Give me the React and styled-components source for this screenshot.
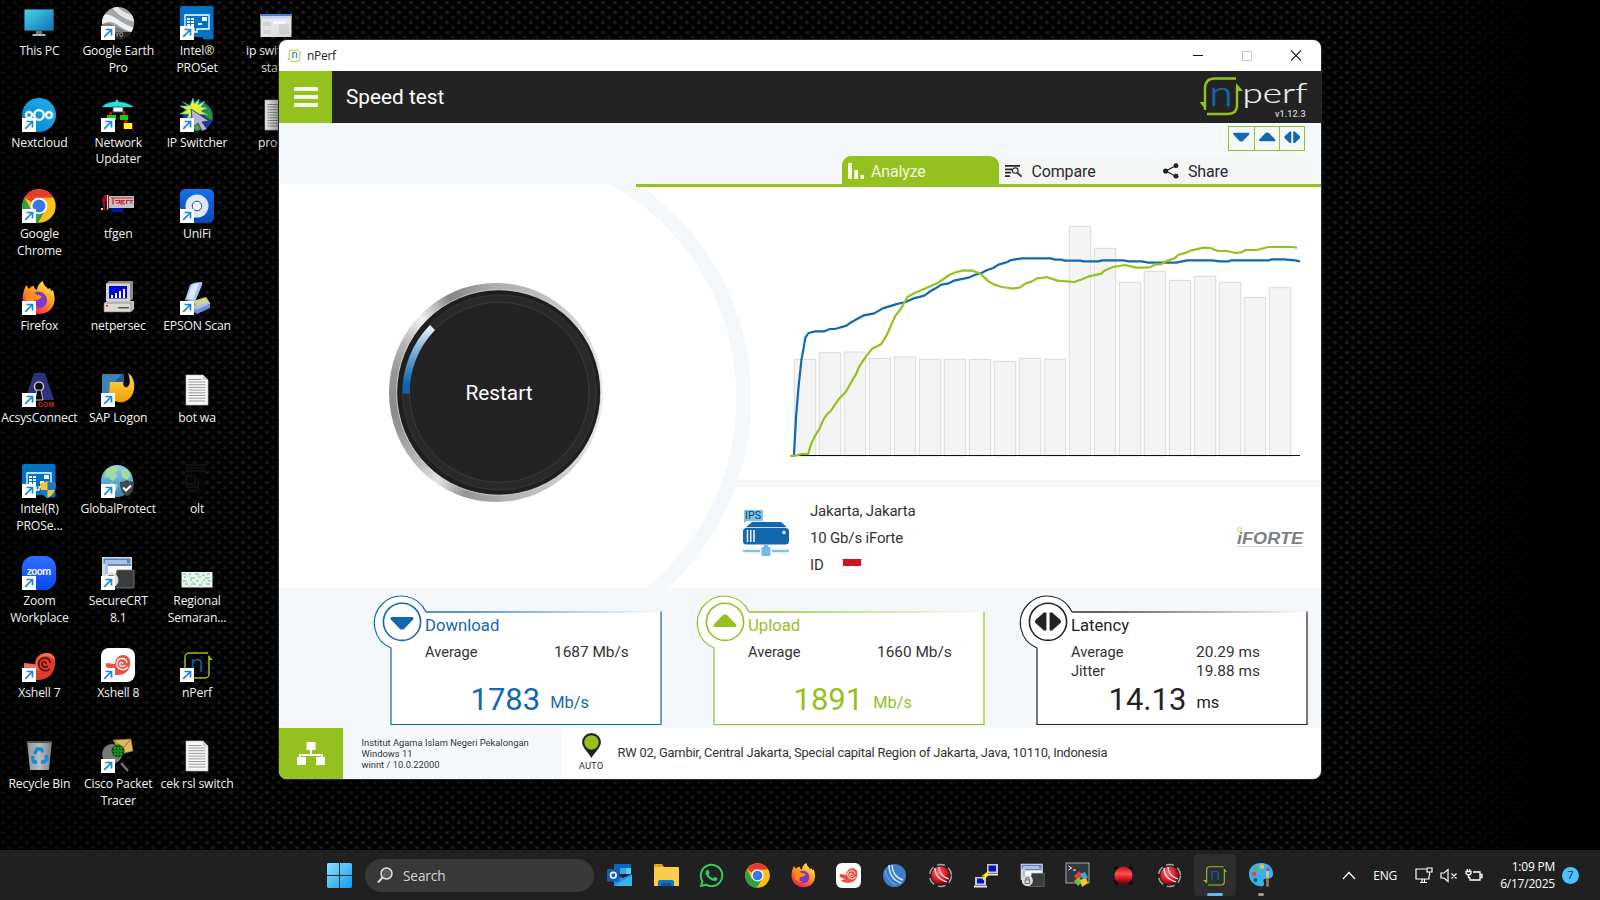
import React from "react";
import styled, { createGlobalStyle, css } from "styled-components";
import { FaWhatsapp } from "react-icons/fa";

const GREEN = "#95c11f";
const BLUE = "#1268b0";
const DARK = "#232323";
const PALE = "#f4f8fb";
const roboto = `Roboto, "Liberation Sans", sans-serif`;
const system = `"Open Sans", "Noto Sans", sans-serif`;

const GlobalStyle = createGlobalStyle`
  * { box-sizing: border-box; }
  body { margin: 0; background: #000; overflow: hidden; }
  svg { display: block; overflow: visible; }
`;

/* ---------- desktop ---------- */

const Desktop = styled.main`
  position: relative;
  width: 1600px;
  height: 900px;
  display: flex;
  flex-direction: column;
  justify-content: space-between;
  overflow: hidden;
  background-color: #020202;
  background-image:
    linear-gradient(90deg, rgba(0, 0, 0, 0.6) 0, rgba(0, 0, 0, 0) 18%, rgba(0, 0, 0, 0) 84%, rgba(0, 0, 0, 0.9) 96%),
    radial-gradient(ellipse 2.8px 2.2px at 3px 2.5px, #242424 0, #181818 60%, transparent 100%),
    radial-gradient(ellipse 2.8px 2.2px at 3px 2.5px, #1f1f1f 0, #151515 60%, transparent 100%);
  background-size: 100% 100%, 12px 10px, 12px 10px;
  background-position: 0 0, 0 0, 6px 5px;
`;

const Shortcuts = styled.div`
  display: grid;
  grid-auto-flow: column;
  grid-template-rows: repeat(9, 91.67px);
  grid-auto-columns: 78.8px;
`;

const Shortcut = styled.div`
  display: flex;
  flex-direction: column;
  align-items: center;
  padding-top: 6px;
`;

const IconBox = styled.div`
  position: relative;
  width: 34px;
  height: 34px;
`;

const ArrowBadge = styled.svg`
  position: absolute;
  left: 0;
  bottom: 0;
`;

const Label = styled.span`
  width: 83px;
  margin-top: 3px;
  text-align: center;
  white-space: pre-line;
  font: 12.2px/16.67px ${system};
  letter-spacing: -0.17px;
  color: #f2f2f2;
  text-shadow: 0 1px 2px #000;
`;

/* ---------- icon drawings ---------- */

const Svg = ({ size = 34, box = 34, children }) => (
  <svg width={size} height={size} viewBox={`0 0 ${box} ${box}`}>{children}</svg>
);

const ThisPc = () => (
  <Svg>
    <defs><linearGradient id="pc" x1="0" y1="0" x2="1" y2="1"><stop stopColor="#45d5e4" /><stop offset="1" stopColor="#1271b8" /></linearGradient></defs>
    <path d="M14 24h6v4h-6z" fill="#6c7880" /><path d="M10.500 28h13v2h-13z" fill="#a9b3b9" />
    <rect x="2" y="3" width="30" height="22" rx="1" fill="#17547c" /><rect x="2.800" y="3.800" width="28.400" height="20.400" fill="url(#pc)" />
  </Svg>
);
const Earth = () => (
  <Svg>
    <defs><clipPath id="ea"><circle cx="17" cy="17" r="16" /></clipPath></defs>
    <g clipPath="url(#ea)">
      <rect width="34" height="34" fill="#a4a6a9" />
      <path d="M0 11C9 3 16 17 34 22v5C18 24 13 10 0 19z" fill="#eef0f1" /><path d="M10 0c6 9 14 13 26 17V9C26 9 20 5 16 0z" fill="#e3e5e6" />
      <path d="M0 19c12-6 18 7 34 8v3H0z" fill="#7b7e82" /><path d="M0 26h34v9H0z" fill="#222" />
    </g>
    <text x="14" y="31" fontSize="6.500" fontFamily="Roboto" fontWeight="700" fill="#999">YO</text>
  </Svg>
);
const Intel = ({ shield }) => (
  <Svg>
    <path d="M2 0h30a1.500 1.500 0 0 1 1.500 1.500V32a1.500 1.500 0 0 1-1.500 1.500H24L22 31H0V2a2 2 0 0 1 2-2z" fill="#0071c5" />
    <path d="M5 9h24v14H17v3h-3v-3H5z" fill="none" stroke="#fff" strokeWidth="1.300" />
    <path d="M7 12h3v2H7zm4 0h3v2h-3zm-4 3h3v2H7zm4 0h3v2h-3zm-4 3h3v2H7zm4 0h3v2h-3zM22 11h5v4h-5zM18 17h4v2h-4z" fill="#fff" />
    {shield && <g><path d="M18 19c4 0 5-1 7.500-2 2.500 1 4 2 8 2 0 8-2 12-8 15-5-3-7.500-7-7.500-15z" fill="#f7ca33" /><path d="M25.500 17c2.500 1 4 2 8 2 0 3 0 5-.7 7h-7.300zM18.500 26h7v8c-4-2-6-4-7-8z" fill="#2175c9" /></g>}
  </Svg>
);
const Nextcloud = () => (
  <Svg>
    <defs><linearGradient id="nc" x1="0" y1="1" x2="1" y2="0"><stop stopColor="#0082c9" /><stop offset="1" stopColor="#26b0f4" /></linearGradient></defs>
    <circle cx="17" cy="17" r="17" fill="url(#nc)" />
    <g fill="none" stroke="#fff" strokeWidth="2.300"><circle cx="17" cy="17" r="4.800" /><circle cx="7" cy="17" r="3" /><circle cx="27" cy="17" r="3" /></g>
  </Svg>
);
const Updater = () => (
  <Svg>
    <path d="M1 9c3-4 9-5 13-5l2-3 2 3c5 0 11 2 15 5z" fill="#19e5e8" />
    <path d="M10 14l-1 4M23 13v5M24 19l2 12" stroke="#e00" strokeWidth="2.500" /><path d="M12 9h10v5H12z" fill="#fff" stroke="#555" />
    <path d="M6 17h9v5H6zM19 17h8v5h-8z" fill="#00d800" /><path d="M23 25h8v6h-8z" fill="#ff0" /><path d="M22 25h1v6h-1zM31 25h1v8h-1z" fill="#d00" />
  </Svg>
);
const IpSwitcher = () => (
  <Svg>
    <circle cx="18" cy="18" r="15" fill="#133d9c" /><path d="M22 5c9 3 12 10 10 18l-7-5z" fill="#2f8c32" /><path d="M8 23l10-5 6 12-8 3z" fill="#3ea63c" />
    <path d="M13 0l1.500 6L19 1l-1 6 7-4-4 6 6 1-6 3 7 4-8-1 1 7-5-5-3 8-1-8-6 5 3-7-9 0 7-4-7-4 8 0L3 4l7 4z" fill="#dcf53a" stroke="#36c9b1" strokeWidth=".7" />
    <path d="M11 11l18 12-7 1 5 7-5 2-4-8-5 4z" fill="#bbb1d8" stroke="#3a3456" strokeWidth=".9" />
  </Svg>
);
const Chrome = ({ size = 34 }) => (
  <Svg size={size}>
    <circle cx="17" cy="17" r="16.700" fill="#fbc116" />
    <path d="M2.500 8.600A16.700 16.700 0 0 1 31.500 8.600L17 8.800z" fill="#e33b2e" /><path d="M17 8.800L31.500 8.600H17A9 9 0 0 0 9.500 13L2.500 8.600z" fill="#e33b2e" />
    <path d="M2.500 8.600A16.700 16.700 0 0 0 16 33.700l7.500-12.400L9.200 21z" fill="#2d9f47" />
    <circle cx="17" cy="17" r="8.300" fill="#fff" /><circle cx="17" cy="17" r="6.500" fill="#3677e8" />
  </Svg>
);
const Tfgen = () => (
  <Svg>
    <path d="M9 19h14l-2 4H11z" fill="#0714a8" /><path d="M1 11l2-5h5v15H3z" fill="#a00f16" /><path d="M4 12h3v8H4z" fill="#07107c" /><path d="M8 7h25v12H8z" fill="#bfc3c8" /><path d="M6 6h1v14H6zM0 19h2v2H0z" fill="#f7ec79" />
    <path d="M10 9h22M12 9.500v6M14 11.500h4.500v2.500H15M24 11.500h-4v3.500h4M20 13.200h3M29 11.500h-3.500v3.500M32 11.500h-2v3" stroke="#d51d26" fill="none" strokeWidth="1.200" />
  </Svg>
);
const Unifi = () => (
  <Svg>
    <defs><linearGradient id="uf" x1="0" y1="0" x2="0" y2="1"><stop stopColor="#1670e8" /><stop offset="1" stopColor="#0749b5" /></linearGradient></defs>
    <rect width="34" height="34" rx="5" fill="url(#uf)" /><circle cx="17" cy="17" r="11.500" fill="#dfe7f3" /><circle cx="17" cy="17" r="4.800" fill="#f7f9fb" stroke="#1d519b" strokeWidth="1" />
  </Svg>
);
const Firefox = ({ size = 34 }) => (
  <Svg size={size}>
    <defs><linearGradient id="ff" x1=".8" y1="0" x2=".2" y2="1"><stop stopColor="#fff14a" /><stop offset=".45" stopColor="#ff9a1f" /><stop offset=".8" stopColor="#ff3d47" /><stop offset="1" stopColor="#e31587" /></linearGradient></defs>
    <path d="M2 9l2-5 3 4c1-2 3-3 5-3 0 2 1 3 3 4 0-3 2-7 6-9 0 4 3 5 5 8l2-1 1 3 2-1c3 9 2 16-4 21-6 4-15 4-21-1C0 24 0 16 2 9z" fill="url(#ff)" />
    <path d="M11 12c6-4 14 0 14 7 0 6-5 9-10 8-5-1-7-6-4-9 3 2 6 1 8-1-2-2-5-3-8-5z" fill="#7a39c8" /><path d="M4 13c3-3 8-3 11 1 2 0 4 0 5 2-2 2-6 1-8 4s1 5 4 5c-6 3-13-3-12-12z" fill="#ff8b1a" />
  </Svg>
);
const Netpersec = () => (
  <Svg>
    <path d="M5 3l3-3h24v18l-3 2z" fill="#8d8d86" /><path d="M5 2.500h24V20H5z" fill="#d5d3cc" /><path d="M8 5h18v12.500H8z" fill="#0006d8" />
    <path d="M10 14h2v3h-2zm4-2h2v5h-2zm4-2h2v7h-2zm4-2h2v9h-2z" fill="#fff" /><path d="M3 22l3-2h27v8l-3 3H3z" fill="#c7c5bd" /><path d="M3 22h27v9H3z" fill="#d9d8d2" stroke="#777" strokeWidth=".6" /><path d="M17 26h11v1.500H17z" fill="#555" /><path d="M5 24h2v1.500H5z" fill="#c22" />
  </Svg>
);
const Epson = () => (
  <Svg>
    <path d="M10 4c2-2 8-3 11-3 1.500 0 1.500 1 1 3l-7 17-10-2z" fill="#a9c3ee" /><path d="M12 4.500c2-1.500 4-2 7-2l-6 16-6-1z" fill="#dce9fb" /><path d="M13 20l13-4 4 6-13 5z" fill="#cfd58e" /><path d="M8 22l8 6 14-5v4l-13 6-9-6z" fill="#6f90d6" /><path d="M10 18l6 7 14-4v2l-14 6-6-6z" fill="#a8c0ed" />
  </Svg>
);
const Acsys = () => (
  <Svg>
    <path d="M12 0h11l9 27H3z" fill="#2c327e" /><circle cx="17" cy="13.500" r="4.500" fill="#0b0b0e" stroke="#c5c6ca" strokeWidth="1.500" /><path d="M15 17l-2 10h8l-2-10z" fill="#0b0b0e" stroke="#b9b9bd" />
    <text x="14" y="34" fontSize="6.600" fontFamily="Liberation Sans" fontWeight="700" fill="#d8232a" textLength="18">.COM</text>
  </Svg>
);
const Sap = () => (
  <Svg>
    <defs><linearGradient id="sa" x1="0" y1="0" x2="0" y2="1"><stop stopColor="#ffe14a" /><stop offset="1" stopColor="#f39a07" /></linearGradient></defs>
    <path d="M1 1h22v9H10v14H1z" fill="#1f5d94" /><path d="M1 1h20l-8 9h-3v14H1z" fill="#5898c8" opacity=".6" />
    <path d="M9 9h13c0 4 2 6 4 5 4-2 3-9 1-14 6 4 8 13 5 20-2 6-8 10-14 9-4 0-8-3-10-6z" fill="url(#sa)" />
  </Svg>
);
const Doc = () => (
  <Svg>
    <path d="M6 2h17l5 5v25H6z" fill="#f7f7f7" stroke="#b9b9b9" strokeWidth=".7" /><path d="M23 2v5h5z" fill="#cfcfcf" />
    <path d="M8.500 6.500h13M8.500 9h17M8.500 11.700h17M8.500 14.400h17M8.500 17.100h17M8.500 19.800h17M8.500 22.500h17M8.500 25.200h17M8.500 28h17" stroke="#9a9a9a" />
  </Svg>
);
const Globe = () => (
  <Svg>
    <defs><linearGradient id="gp" x1="0" y1="0" x2="0" y2="1"><stop stopColor="#8fd0ef" /><stop offset="1" stopColor="#2c8ab8" /></linearGradient></defs>
    <circle cx="16" cy="17" r="16" fill="url(#gp)" /><path d="M6 5l8-3 4 3-4 4 3 3-5 5-5-4-4 1zM20 6l6-1 4 6-4 5-5-3zM10 19l7 2-3 8-5-4z" fill="#a8d9a3" />
    <path d="M19 18c3 0 5-1 7-2 2 1 4 2 7 2 0 8-2 12-7 14-5-2-7-6-7-14z" fill="#45484b" /><path d="M22 23.500l3 3 5-5" fill="none" stroke="#fff" strokeWidth="2" />
  </Svg>
);
const Olt = () => (
  <Svg><path d="M5 1h20v29H5z" fill="#050505" /><path d="M6 1h21M6 4h20M6 7h20M6 12h9v8H6zM6 23h11M8 27h9M18 14v13" fill="none" stroke="#1c1c1c" /></Svg>
);
const Zoom = () => (
  <Svg>
    <defs><linearGradient id="zm" x1="0" y1="0" x2="0" y2="1"><stop stopColor="#2f6fff" /><stop offset="1" stopColor="#0a46ef" /></linearGradient></defs>
    <rect width="34" height="34" rx="11.500" fill="url(#zm)" /><text x="5" y="19" fontFamily="Lato" fontSize="10.500" fontWeight="700" fill="#fff" textLength="24">zoom</text>
  </Svg>
);
const SecureCrt = ({ size = 34 }) => (
  <Svg size={size}>
    <path d="M1 1h30v22H1z" fill="#d3d8de" /><path d="M2.500 2.500h27v5h-27z" fill="#5c83bd" /><path d="M4 4h22v15H4z" fill="#a9c2e5" /><path d="M7 8h23v10H7z" fill="#fafafa" /><path d="M7 8h23v2H7z" fill="#6288bf" />
    <path d="M16 14h17v18H12z" fill="#3b3c3e" stroke="#77797b" strokeWidth=".8" /><circle cx="10" cy="24" r="7.500" fill="#ddd" /><path d="M7 23h6v5H7zM8 23v-3h4v3" fill="none" stroke="#666" strokeWidth="1.300" />
  </Svg>
);
const MapThumb = () => (
  <Svg>
    <path d="M1.500 16h31v15.500h-31z" fill="#edf4ec" />
    <path d="M3 18h3m3 0h2m4 0h4m3 1h3m2-1h3M4 21h2m4 1h5m4-1h2m4 1h5M3 25h4m3-1h2m4 1h3m4-1h2m3 1h3M5 28h3m3 0h5m3 1h3m4-1h4" stroke="#86d3c0" strokeWidth="1.300" fill="none" />
    <path d="M7 20h2M17 20h2M26 23h2M12 26h2M21 27h2M8 30h3" stroke="#e2c98a" />
  </Svg>
);
const Shell = ({ c1 = "#e0392c", c2 = "#f0705a" }) => (
  <g>
    <path d="M13 16C13 9 18 5 24 5c6 0 9 4 9 8 0 2 1 4 0 4-1 8-6 14-16 15H9C5 30 3 27 2 24V15z" fill={c1} />
    <path d="M2 15l12 2c0-7 5-12 11-12 5 0 8 3 8 8-3-4-6-5-9-5-6 0-9 4-9 9l3 6c-4-3-9-4-16-3z" fill={c2} />
    <path d="M28 15c0-6-9-7-11-1-2 7 6 11 11 7M24 16c0-3-4-3-4 0s3 4 6 2" fill="none" stroke="#4a1210" strokeWidth="1.600" />
  </g>
);
const Xshell7 = () => <Svg><Shell /></Svg>;
const Xshell8 = ({ size = 34 }) => (
  <Svg size={size}>
    <rect width="34" height="34" rx="8" fill="#fff" />
    <path d="M5 15l9 1c0-5 4-9 8-9 4 0 7 3 7 6 1 8-4 14-12 14-5 0-8-1-10-4l6-1-8-3z" fill="#e9503f" />
    <path d="M26 15c-1-6-9-6-10 0-1 6 7 9 11 4M22 16c-1-3-4-2-3 1 1 2 4 2 5 0" fill="none" stroke="#fff" strokeWidth="1.300" />
  </Svg>
);
const NPerfMark = ({ size = 34, soft }) => (
  <Svg size={size}>
    <g opacity={soft ? 0.8 : 1}>
      <path d="M28 5H9a4 4 0 0 0-4 4v18M7 30h18a4 4 0 0 0 4-4V8" fill="none" stroke={GREEN} strokeWidth={soft ? 2.4 : 1.5} /><path d="M28 7l5 5h-4zM5 28l-5-5h5z" fill={GREEN} />
      <text x="10" y="23.500" fontSize="25" fontFamily="Lato" fontWeight="300" fill={BLUE} stroke={BLUE} strokeWidth={soft ? 1.2 : 0.3}>n</text>
    </g>
  </Svg>
);
const Recycle = () => (
  <Svg>
    <defs><linearGradient id="rb" x1="0" y1="0" x2="1" y2="0"><stop stopColor="#8d9398" /><stop offset=".5" stopColor="#b9bec1" /><stop offset="1" stopColor="#777c80" /></linearGradient></defs>
    <path d="M5 2h25l-3 29H8z" fill="url(#rb)" /><path d="M5 2h25l-.4 2H5.400z" fill="#4c5053" />
    <g fill="none" stroke="#1689d8" strokeWidth="3.400"><path d="M12.500 15l2.500-5h4l2 3M24 16l1 4-3 3h-3M15 23h-3l-1.500-4 1-2" /></g>
  </Svg>
);
const Packet = () => (
  <Svg>
    <circle cx="11" cy="15" r="10" fill="#77797a" /><path d="M12 1l18-1 2 12-12 3z" fill="#e6b85b" stroke="#8f6c26" strokeWidth=".6" /><path d="M12 1l10 8 8-9" fill="none" stroke="#8f6c26" />
    <circle cx="17" cy="12" r="6.500" fill="#063c0c" /><path d="M12 9h10M11 12h12M12 15h10M14 6v12M17 5v14M20 6v12" stroke="#29c22e" strokeWidth=".8" /><path d="M20 24l7 8" stroke="#777" strokeWidth="2.200" />
  </Svg>
);
const WindowThumb = () => (
  <Svg><path d="M1.500 8h31v23h-31z" fill="#e6e6e7" /><path d="M1.500 8h31v2h-31z" fill="#4f79df" /><path d="M1.500 10h31v2.500h-31z" fill="#c4d2f2" /><path d="M4 16h8v4H4zM20 18h10v10H20zM4 24h8v4H4z" fill="#d4d4d6" /><path d="M14 15h12v3H14z" fill="#f8f8f8" /></Svg>
);

const LinkArrow = () => (
  <ArrowBadge width="14" height="14" viewBox="0 0 14 14">
    <rect width="14" height="14" fill="#fff" /><path d="M3.200 10.800L10 4M4.500 3.500h6v6" fill="none" stroke="#1787d8" strokeWidth="1.700" />
  </ArrowBadge>
);

const shortcuts = [
  ["This PC", ThisPc], ["Nextcloud", Nextcloud, 1], ["Google\nChrome", Chrome, 1], ["Firefox", Firefox, 1], ["AcsysConnect", Acsys, 1],
  ["Intel(R)\nPROSe...", () => <Intel shield />, 1], ["Zoom\nWorkplace", Zoom, 1], ["Xshell 7", Xshell7, 1], ["Recycle Bin", Recycle],
  ["Google Earth\nPro", Earth, 1], ["Network\nUpdater", Updater, 1], ["tfgen", Tfgen], ["netpersec", Netpersec], ["SAP Logon", Sap, 1],
  ["GlobalProtect", Globe, 1], ["SecureCRT\n8.1", SecureCrt, 1], ["Xshell 8", Xshell8, 1], ["Cisco Packet\nTracer", Packet, 1],
  ["Intel®\nPROSet", Intel, 1], ["IP Switcher", IpSwitcher, 1], ["UniFi", Unifi, 1], ["EPSON Scan", Epson, 1], ["bot wa", Doc],
  ["olt", Olt], ["Regional\nSemaran...", MapThumb], ["nPerf", NPerfMark, 1], ["cek rsl switch", Doc],
  ["ip switcher\nstatic", WindowThumb], ["proset", Doc],
];

/* ---------- nPerf window ---------- */

const Window = styled.section`
  position: absolute;
  left: 279px;
  top: 40px;
  width: 1042px;
  height: 739px;
  display: flex;
  flex-direction: column;
  border-radius: 8px;
  overflow: hidden;
  background: #fff;
  color: #333;
  font-family: ${roboto};
  box-shadow: 0 0 0 1px #2b2b2b, 0 8px 22px rgba(0, 0, 0, 0.8);
`;

const TitleBar = styled.div`
  display: flex;
  align-items: center;
  flex: 0 0 31px;
  padding: 0 19px 0 8px;
  font: 12px/31px ${system};
  letter-spacing: -0.3px;
  color: #222;
`;

const AppName = styled.span`
  flex: 1;
  margin-left: 5px;
`;

const Controls = styled.div`
  display: flex;
  gap: 37px;
`;

const Header = styled.header`
  display: flex;
  flex: 0 0 52px;
  background: ${DARK};
`;

const MenuButton = styled.button`
  display: flex;
  flex-direction: column;
  justify-content: center;
  align-items: center;
  gap: 4px;
  width: 53px;
  padding: 0;
  border: 0;
  background: ${GREEN};
`;

const MenuLine = styled.i`
  width: 24px;
  height: 4px;
  border-radius: 1px;
  background: #f6fbe8;
`;

const PageTitle = styled.h1`
  flex: 1;
  margin: 0 0 0 14px;
  font: 400 20.8px/52px ${roboto};
  color: #fff;
`;

const Strip = styled.div`
  display: flex;
  flex-direction: column;
  align-items: flex-end;
  justify-content: space-between;
  flex: 0 0 61px;
  padding-top: 3px;
  background: ${PALE};
`;

const QuickButtons = styled.div`
  display: flex;
  margin-right: 16px;
  border: 1px solid ${GREEN};
`;

const QuickButton = styled.div`
  display: flex;
  align-items: center;
  justify-content: center;
  width: 25px;
  height: 23px;
  padding-bottom: 3px;
  & + & { border-left: 1px solid ${GREEN}; }
`;

const Tabs = styled.nav`
  display: flex;
  margin-right: 8px;
`;

const Tab = styled.div`
  display: flex;
  align-items: center;
  width: 157px;
  height: 28px;
  padding: 2px 0 0 ${(p) => p.$pad}px;
  gap: ${(p) => p.$gap}px;
  border-radius: 9px 9px 0 0;
  font-size: 16px;
  letter-spacing: -0.15px;
  background: ${(p) => (p.$active ? GREEN : "#f4f5f5")};
  color: ${(p) => (p.$active ? "#f3f8df" : "#2b2b2b")};
`;

const Middle = styled.div`
  position: relative;
  display: flex;
  flex: 0 0 404px;
  overflow: hidden;
`;

const ArcBackdrop = styled.svg`
  position: absolute;
  inset: 0;
`;

const DialPane = styled.div`
  position: relative;
  width: 357px;
  padding: 99px 0 0 110px;
`;

const Dial = styled.button`
  position: relative;
  display: flex;
  align-items: center;
  justify-content: center;
  width: 214px;
  height: 219px;
  padding: 0 0 0 6px;
  border: 0;
  border-radius: 50%;
  font: 20.8px ${roboto};
  color: #fff;
  background: conic-gradient(#aeaeae 0deg, #b9b9b9 20deg, #cfcfcf 45deg, #e2e2e2 65deg, #ededed 90deg, #e6e6e6 115deg, #c9c9c9 145deg,
    #b0b0b0 175deg, #959595 197deg, #e4e4e4 214deg, #b8b8b8 228deg, #8a8a8a 258deg, #969696 280deg, #b5b5b5 298deg,
    #f2f2f2 315deg, #858585 334deg, #aeaeae 360deg);
`;

const DialFace = styled.svg`
  position: absolute;
  left: 0;
  top: 0;
`;

const DialText = styled.span`
  position: relative;
`;

const Results = styled.div`
  position: relative;
  display: flex;
  flex-direction: column;
  width: 685px;
  border-top: 3px solid ${GREEN};
`;

const ChartArea = styled.div`
  height: 293px;
  padding: 13px 0 0 144px;
`;

const Divider = styled.div`
  height: 7px;
  margin-left: 94px;
  background: ${PALE};
`;

const ServerRow = styled.div`
  display: flex;
  align-items: flex-start;
  flex: 1;
  padding: 11px 17px 0 107px;
`;

const ServerIcon = styled.div`
  padding-top: 11px;
  width: 67px;
`;

const ServerInfo = styled.div`
  flex: 1;
  font-size: 15px;
  line-height: 27px;
  letter-spacing: -0.17px;
`;

const Country = styled.div`
  display: flex;
  align-items: center;
  gap: 18px;
`;

const Flag = styled.i`
  width: 20px;
  height: 14px;
  border: 1px solid #f1f1f1;
  border-top-color: #cf1126;
  background: linear-gradient(#cf1126 50%, #fff 50%);
`;

const Provider = styled.div`
  padding-top: 28px;
`;

const Cards = styled.div`
  display: flex;
  flex: 0 0 139.5px;
  gap: 33px;
  padding: 5px 0 0 94px;
  background: ${PALE};
`;

const Card = styled.article`
  position: relative;
  width: 290px;
  height: 133px;
  color: ${(p) => p.$color};
`;

const CardOutline = styled.svg`
  position: absolute;
  left: 0;
  top: 0;
`;

const CardBody = styled.div`
  position: relative;
  display: flex;
  flex-direction: column;
  height: 100%;
  padding: 23px 0 0 52px;
`;

const CardTitle = styled.h2`
  margin: 0;
  font: 400 16.7px/20px ${roboto};
`;

const Stats = styled.dl`
  display: grid;
  grid-template-columns: ${(p) => (p.$tight ? "125px auto" : "129px auto")};
  align-content: start;
  align-items: baseline;
  flex: 0 0 38.5px;
  height: 38.5px;
  margin: 7px 0 0;
  font-size: 15.4px;
  line-height: 19px;
  color: #333;
`;

const StatName = styled.dt`
  font-size: 14.6px;
`;

const StatValue = styled.dd`
  margin: 0;
`;

const Reading = styled.div`
  display: flex;
  align-items: baseline;
  gap: 10px;
  padding-left: ${(p) => p.$indent}px;
  line-height: 36px;
`;

const ReadingValue = styled.span`
  font-size: 31px;
`;

const ReadingUnit = styled.span`
  position: relative;
  top: -1.5px;
  font-size: 16.4px;
`;

const Footer = styled.footer`
  display: flex;
  flex: 1;
`;

const NetworkButton = styled.div`
  display: flex;
  align-items: center;
  justify-content: center;
  width: 63.5px;
  background: ${GREEN};
`;

const DeviceInfo = styled.div`
  width: 218.5px;
  padding: 9px 0 0 19px;
  background: ${PALE};
  font-size: 9.35px;
  line-height: 11px;
  white-space: nowrap;
`;

const Place = styled.div`
  display: flex;
  align-items: flex-start;
  flex: 1;
  padding-left: 18.5px;
`;

const PinBox = styled.div`
  display: flex;
  flex-direction: column;
  align-items: center;
  width: 23px;
  padding-top: 5.5px;
  font-size: 9.5px;
  line-height: 15px;
`;

const Address = styled.span`
  margin: 15px 0 0 15px;
  font-size: 12.9px;
  line-height: 20px;
  letter-spacing: -0.2px;
`;

const shapes = {
  down: "M1 1h20q2 1 0 3l-8 8q-2 1-4 0L1 4q-2-2 0-3z",
  up: "M1 12h20q2-1 0-3L13 1q-2-1-4 0L1 9q-2 2 0 3z",
};

const Glyph = ({ kind, width, height, color }) => (
  <svg width={width} height={height} viewBox={kind === "both" ? "0 0 26 19" : "0 0 22 13"} preserveAspectRatio="none" fill={color}>
    {kind === "both"
      ? <path d="M11.500 1v17q-1.500 1.500-3 0L1 11q-1.500-1.500 0-3l7.500-7q1.500-1.500 3 0zM14.500 1v17q1.500 1.500 3 0l7.500-7q1.500-1.500 0-3l-7.500-7q-1.500-1.500-3 0z" />
      : <path d={shapes[kind]} />}
  </svg>
);

const CompareIcon = () => (
  <svg width="17" height="13" viewBox="0 0 17 14" preserveAspectRatio="none">
    <path d="M0 1h15M0 4.600h7M0 8.200h6M0 12h5" stroke="#2b2b2b" strokeWidth="1.900" />
    <circle cx="10.200" cy="6" r="2.900" fill="none" stroke="#2b2b2b" strokeWidth="1.200" /><path d="M12.300 8.200l4.200 4.300" stroke="#2b2b2b" strokeWidth="1.800" />
  </svg>
);

const ShareIcon = () => (
  <svg width="16" height="16" viewBox="0 0 17 17" fill="#1f1f1f">
    <path d="M13.500 3L3 8.500l10.500 5.500" fill="none" stroke="#1f1f1f" strokeWidth="1.300" />
    <circle cx="13.800" cy="2.800" r="2.600" /><circle cx="2.800" cy="8.500" r="2.700" /><circle cx="13.800" cy="14" r="2.600" />
  </svg>
);

const Logo = () => (
  <svg width="122" height="52" viewBox="1199 71 122 52">
    <path d="M1236 78.500h-21q-10 0-10 10v21.500M1207 114h21q9 0 9-9V88" fill="none" stroke={GREEN} strokeWidth="2.400" />
    <path d="M1236 83l7 8h-7zM1206 110l-6.500-8h6.500z" fill={GREEN} />
    <text x="1209.500" y="105.500" fontFamily="Lato" fontWeight="300" fontSize="35" fill={BLUE} stroke={BLUE} strokeWidth=".6" textLength="23" lengthAdjust="spacingAndGlyphs">n</text>
    <text x="1242.500" y="102.500" fontFamily="Lato" fontWeight="300" fontSize="27" fill="#f4f4f4" stroke="#f4f4f4" strokeWidth=".2" textLength="65" lengthAdjust="spacingAndGlyphs">perf</text>
    <text x="1275" y="117" fontFamily="Roboto" fontWeight="500" fontSize="9" fill="#ccc" textLength="30.500">v1.12.3</text>
  </svg>
);

const barTops = [478, 458, 456, 475, 471, 478, 478, 478, 484, 475, 478, 79, 145, 247, 214, 241, 229, 247, 292, 263];
const downloadLine = "67,767 73,650 80,560 88,480 94,445 99,413 108,399 127,394 152,394 168,387 182,387 214,377 230,365 263,346 292,340 316,325 352,313 380,306 400,296 432,287 450,273 465,264 480,254 497,251 515,242 556,233 573,225 592,219 608,210 625,204 640,194 665,186 672,181 705,175 786,175 798,179 815,179 826,182 870,182 877,184 920,184 930,181 988,181 1006,184 1040,184 1060,188 1137,188 1168,181 1238,181 1260,184 1285,184 1290,181 1398,181 1405,178 1440,178 1470,181 1484,184";
const uploadLine = "57,768 68,768 88,762 107,762 112,742 118,725 127,706 140,683 149,660 158,645 170,633 192,598 212,576 232,538 241,522 250,499 263,478 286,446 311,433 327,405 350,349 366,327 385,291 405,279 470,249 502,225 522,216 542,211 568,212 590,222 612,244 628,254 650,261 680,266 699,263 716,250 732,245 750,234 762,234 774,231 805,242 852,246 870,239 890,230 928,221 936,212 960,201 995,195 1025,203 1050,203 1066,201 1078,193 1094,193 1115,181 1132,175 1143,165 1165,158 1180,151 1215,143 1232,144 1254,153 1280,153 1304,159 1320,157 1332,150 1362,150 1396,141 1465,141 1476,144";

const Chart = () => (
  <svg width="530" height="270" viewBox="28 0 1484 810" preserveAspectRatio="none">
    {barTops.map((top, i) => (
      <rect key={i} x={68 + i * 70} y={top} width="60" height={768 - top} fill="#f4f4f4" stroke="#d9d9d9" vectorEffect="non-scaling-stroke" />
    ))}
    <path d="M57 766.500H1484" stroke="#111" strokeWidth="1.200" vectorEffect="non-scaling-stroke" />
    <g fill="none" strokeWidth="2.200" strokeLinejoin="round">
      <polyline points={downloadLine} stroke={BLUE} vectorEffect="non-scaling-stroke" />
      <polyline points={uploadLine} stroke={GREEN} vectorEffect="non-scaling-stroke" />
    </g>
  </svg>
);

const ServerDrawing = () => (
  <svg width="47" height="48" viewBox="0 0 47 48">
    <path d="M1 1h19v11H4l-3 2z" fill="#7cc4ee" />
    <text x="2" y="9.700" fontFamily="Roboto" fontSize="10.500" fill="#12395c" textLength="16" lengthAdjust="spacingAndGlyphs">IPS</text>
    <path d="M3 18.300l6-5.300h29l6 5.300z" fill={BLUE} /><rect x="0" y="19" width="46" height="16.500" rx="3.500" fill={BLUE} />
    <path d="M4.500 21v12M7.800 21v12M11 21v12" stroke="#fff" strokeWidth="1.400" /><circle cx="41" cy="23.500" r="1.700" fill="#fff" />
    <path d="M0 42h46" stroke="#7cc4ee" strokeWidth="2.400" /><path d="M17 40h12v4H17z" fill="#fff" /><rect x="18.500" y="38" width="9" height="9" rx="1.500" fill="#6ebae8" /><path d="M21 36h4v3h-4z" fill="#6ebae8" />
  </svg>
);

const cards = [
  { id: "d", color: BLUE, kind: "down", title: "Download", rows: [["Average", "1687 Mb/s"]], value: "1783", unit: "Mb/s", indent: 45.5 },
  { id: "u", color: GREEN, kind: "up", title: "Upload", rows: [["Average", "1660 Mb/s"]], value: "1891", unit: "Mb/s", indent: 45.5 },
  { id: "l", color: DARK, kind: "both", title: "Latency", rows: [["Average", "20.29 ms"], ["Jitter", "19.88 ms"]], value: "14.13", unit: "ms", indent: 37.5 },
];

const ResultCard = ({ id, color, kind, title, rows, value, unit, indent }) => (
  <Card $color={color}>
    <CardOutline width="290" height="133" viewBox="0 0 290 133">
      <defs><linearGradient id={`fade-${id}`} gradientUnits="userSpaceOnUse" x1="52" x2="285" y1="0" y2="0"><stop offset=".15" stopColor={color} /><stop offset="1" stopColor={color} stopOpacity="0" /></linearGradient></defs>
      <path d="M53 19H288V131.500H18V55A27 27 0 1 1 53 19" fill="#fff" />
      <path d="M288 18.500V131.500H18V55A27 27 0 1 1 53 19" fill="none" stroke={color} strokeWidth="1.200" />
      <rect x="53" y="18.300" width="235" height="1.400" fill={`url(#fade-${id})`} />
      <circle cx="29" cy="28.800" r="18.600" fill="#fff" stroke={color} strokeWidth="1.600" />
      <svg x={kind === "both" ? 15.5 : 17.5} y={kind === "both" ? 19 : kind === "up" ? 21 : 23}>
        <Glyph kind={kind} width={kind === "both" ? 27 : 23} height={kind === "both" ? 19 : 14} color={color} />
      </svg>
    </CardOutline>
    <CardBody>
      <CardTitle>{title}</CardTitle>
      <Stats $tight={rows.length > 1}>
        {rows.map(([k, v]) => <React.Fragment key={k}><StatName>{k}</StatName><StatValue>{v}</StatValue></React.Fragment>)}
      </Stats>
      <Reading $indent={indent}><ReadingValue>{value}</ReadingValue><ReadingUnit>{unit}</ReadingUnit></Reading>
    </CardBody>
  </Card>
);

/* ---------- taskbar ---------- */

const Taskbar = styled.footer`
  display: flex;
  align-items: center;
  height: 50px;
  padding-left: 327px;
  background: #202020;
  font-family: ${system};
  color: #fff;
`;

const SearchBox = styled.div`
  display: flex;
  align-items: center;
  gap: 10px;
  width: 229px;
  height: 33px;
  margin: 0 3px 0 13px;
  padding: 0 0 0 12px;
  border-radius: 17px;
  background: #383838;
  color: #d3d3d3;
  font-size: 13.6px;
  letter-spacing: -0.1px;
`;

const Apps = styled.div`
  display: flex;
`;

const AppSlot = styled.div`
  position: relative;
  display: flex;
  align-items: center;
  justify-content: center;
  width: 42px;
  height: 42px;
  margin: 0 1.920px;
  border-radius: 4px;
  ${(p) => p.$active && css`background: #2d2d2d;`}
`;

const Indicator = styled.i`
  position: absolute;
  bottom: 0;
  left: 50%;
  width: ${(p) => p.$w}px;
  height: 3px;
  border-radius: 2px;
  background: ${(p) => p.$c};
  transform: translateX(-50%);
`;

const Tray = styled.div`
  display: flex;
  align-items: center;
  justify-content: flex-end;
  flex: 1;
  padding-right: 21px;
  font-size: 12px;
  letter-spacing: -0.22px;
`;

const Language = styled.span`
  margin: 0 18px 0 17px;
`;

const Status = styled.div`
  display: flex;
  align-items: center;
  gap: 7px;
`;

const Clock = styled.div`
  width: 72px;
  text-align: right;
  line-height: 17px;
`;

const Notice = styled.span`
  width: 17px;
  height: 17px;
  margin-left: 7px;
  border-radius: 50%;
  background: #4cc2ff;
  color: #10283a;
  font-size: 10.5px;
  line-height: 17px;
  text-align: center;
`;

const Start = () => (
  <svg width="25" height="25" viewBox="0 0 25 25">
    <defs><linearGradient id="win" x1="0" y1="0" x2="1" y2="1"><stop stopColor="#8be1fb" /><stop offset="1" stopColor="#0f9bf2" /></linearGradient></defs>
    <path d="M1 0h11v12H0V1zM13 0h11l1 1v11H13zM0 13h12v12H1l-1-1zM13 13h12v11l-1 1H13z" fill="url(#win)" />
  </svg>
);
const Outlook = () => (
  <Svg size={25} box={25}>
    <path d="M7 1h17v9H7z" fill="#1066b5" /><path d="M13 5h6v6h-6z" fill="#32a9e7" /><path d="M19 5h5v6h-5z" fill="#51d0f8" /><path d="M7 11l9 4 9-4v12H7z" fill="#1c8fe0" /><path d="M7 23l18-11v11z" fill="#36b3f0" /><rect x="0" y="6" width="12.500" height="12.500" rx="1" fill="#0f5fb5" />
    <circle cx="6.300" cy="12.200" r="2.800" fill="none" stroke="#fff" strokeWidth="1.700" />
  </Svg>
);
const Explorer = () => (
  <Svg size={26} box={26}><path d="M1 3q0-1 1-1h7l2 3H1z" fill="#e0a31c" /><path d="M1 5h24q1 0 1 1v18H1z" fill="#fccd4a" /><path d="M5 24v-4q0-2 2-2h12q2 0 2 2v4z" fill="#1673c3" /><path d="M8 21h10v3H8z" fill="#0e5599" /></Svg>
);
const BlueOrb = () => (
  <Svg size={25} box={25}><circle cx="12.500" cy="12.500" r="11.500" fill="#3b7ec9" /><path d="M7 2c0 9 4 15 12 18M10 2c0 7 4 13 11 15" fill="none" stroke="#e2eefb" strokeWidth="1.400" /><path d="M3 7c1 7 5 12 11 15" fill="none" stroke="#6fa5de" strokeWidth="1.200" /></Svg>
);
const RedOrb = () => (
  <Svg size={25} box={25}>
    <defs><radialGradient id="ro" cx=".4" cy=".35" r=".7"><stop stopColor="#ff6b74" /><stop offset=".6" stopColor="#d71928" /><stop offset="1" stopColor="#5a070c" /></radialGradient></defs>
    <circle cx="12.500" cy="12.500" r="11" fill="none" stroke="#a9a9a9" strokeWidth="1.400" strokeDasharray="8 4" /><circle cx="12.500" cy="12.500" r="9.200" fill="url(#ro)" />
    <path d="M7 5c0 7 5 12 12 14M11 4c0 6 4 10 10 12" fill="none" stroke="#ffdfe1" strokeWidth="1.300" />
  </Svg>
);
const RedBall = () => (
  <Svg size={25} box={25}>
    <defs><linearGradient id="rball" x1="0" y1="0" x2="0" y2="1"><stop stopColor="#b3121a" /><stop offset=".4" stopColor="#ff5252" /><stop offset=".65" stopColor="#e8141f" /><stop offset="1" stopColor="#4b0508" /></linearGradient></defs>
    <path d="M4 4l4 4M21 4l-4 4M4 21l4-4M21 21l-4-4" stroke="#0b0b0b" strokeWidth="4" /><circle cx="12.500" cy="12.500" r="9" fill="url(#rball)" />
  </Svg>
);
const Putty = () => (
  <Svg size={25} box={25}>
    <path d="M13 1h11v9H13zM1 14h11v8H1z" fill="#c9c9c9" /><path d="M14.500 2.500h7.500v6h-7.500zM3 15.500h7v5H3z" fill="#0a12c9" /><path d="M11 10.500h13v2H11zM0 22.500h13v2H0z" fill="#e6e6e6" /><path d="M15 8.500l-5 4h3l-4 4" fill="none" stroke="#ffee1c" strokeWidth="1.800" />
  </Svg>
);
const Terminal = () => (
  <Svg size={26} box={26}>
    <rect x="1" y="1" width="23" height="20" fill="#34373b" stroke="#a5a8aa" /><path d="M3.500 4l3 2-3 2M8 8h3" fill="none" stroke="#fff" />
    <path d="M9 14l5-5 4 5-5 5z" fill="#e53b30" /><path d="M15 12l5-2 3 6-5 1z" fill="#3fa7f1" /><path d="M9 19l5-4 3 5-4 4z" fill="#6ac43d" /><path d="M15 18l6-2 2 5-6 4z" fill="#f9c62e" />
  </Svg>
);
const Paint = () => (
  <Svg size={26} box={26}>
    <path d="M13 1c8 0 12 5 12 11 0 5-5 5-8 5-2 0-2 2-1 4 1 3-2 4-5 3C5 23 1 18 1 12 1 5 6 1 13 1z" fill="#3bb3ea" />
    <circle cx="6" cy="12" r="2.200" fill="#e4473a" /><circle cx="8" cy="6.500" r="2.200" fill="#57b847" /><circle cx="14" cy="4.500" r="2.200" fill="#f7c331" /><circle cx="20" cy="7.500" r="2" fill="#8754c8" /><circle cx="7.500" cy="18" r="2" fill="#16506f" />
    <path d="M18 9h3l-.5 7h-2z" fill="#e8c48c" /><path d="M18 16h3v8q-1.500 2-3 0z" fill="#a06c37" />
  </Svg>
);

const apps = [
  <Outlook />, <Explorer />, <FaWhatsapp size={27} color="#31cf62" />, <Chrome size={25} />, <Firefox size={25} />, <Xshell8 size={25} />,
  <BlueOrb />, <RedOrb />, <Putty />, <SecureCrt size={25} />, <Terminal />, <RedBall />, <RedOrb />, <NPerfMark size={25} />, <Paint />,
];

export default function App() {
  return (
    <Desktop>
      <GlobalStyle />
      <Shortcuts>
        {shortcuts.map(([name, Icon, linked]) => (
          <Shortcut key={name}>
            <IconBox><Icon />{linked && <LinkArrow />}</IconBox>
            <Label>{name}</Label>
          </Shortcut>
        ))}
      </Shortcuts>

      <Window>
        <TitleBar>
          <NPerfMark size={15} soft />
          <AppName>nPerf</AppName>
          <Controls>
            <svg width="12" height="12" viewBox="0 0 12 12"><path d="M1 5.500h10" stroke="#111" /></svg>
            <svg width="12" height="12" viewBox="0 0 12 12"><rect x="1.500" y="1.500" width="9" height="9" fill="none" stroke="#ccc" /></svg>
            <svg width="12" height="12" viewBox="0 0 12 12"><path d="M1 .5l10 10M11 .5L1 10.500" stroke="#222" strokeWidth="1.100" /></svg>
          </Controls>
        </TitleBar>
        <Header>
          <MenuButton><MenuLine /><MenuLine /><MenuLine /></MenuButton>
          <PageTitle>Speed test</PageTitle>
          <Logo />
        </Header>
        <Strip>
          <QuickButtons>
            <QuickButton><Glyph kind="down" width={16.5} height={10} color={BLUE} /></QuickButton>
            <QuickButton><Glyph kind="up" width={16.5} height={10} color={BLUE} /></QuickButton>
            <QuickButton><Glyph kind="both" width={16.5} height={12.5} color={BLUE} /></QuickButton>
          </QuickButtons>
          <Tabs>
            <Tab $active $pad={6} $gap={7}>
              <svg width="16" height="16" viewBox="0 0 16 16" fill="#f8fce9"><path d="M0 0h4v16H0zM6.300 7h3.700v9H6.300zM12.500 12H16v4h-3.500z" /></svg>
              Analyze
            </Tab>
            <Tab $pad={6} $gap={9.5}><CompareIcon /> Compare</Tab>
            <Tab $pad={6.5} $gap={9.5}><ShareIcon /> Share</Tab>
          </Tabs>
        </Strip>
        <Middle>
          <ArcBackdrop width="1042" height="404" viewBox="279 184 1042 404">
            <defs><clipPath id="right-side"><rect x="560" y="184" width="300" height="404" /></clipPath></defs>
            <path d="M605 184h36l-5 3z" fill={PALE} />
            <ellipse cx="495.600" cy="398" rx="248.200" ry="250" fill="none" stroke={PALE} strokeWidth="15" clipPath="url(#right-side)" />
          </ArcBackdrop>
          <DialPane>
            <Dial>
              <DialFace width="213" height="219" viewBox="389 283 213 219">
                <defs><linearGradient id="prog" gradientUnits="userSpaceOnUse" x1="0" y1="325" x2="0" y2="384"><stop stopColor="#f4f8fc" /><stop offset=".45" stopColor="#79afd9" /><stop offset="1" stopColor="#0f66b0" /></linearGradient></defs>
                <ellipse cx="498.700" cy="392.500" rx="102" ry="102.700" fill="#1f1f1f" stroke="#f4f4f4" strokeOpacity=".7" strokeWidth="1" />
                <ellipse cx="499.500" cy="392.400" rx="97" ry="97.500" fill="#292929" stroke="#3a3a3a" strokeWidth=".8" />
                <ellipse cx="499.200" cy="392.300" rx="89.800" ry="90" fill={DARK} stroke="#404040" strokeWidth=".8" />
                <path d="M406 393.500A93.500 93.800 0 0 1 432.500 327.500" fill="none" stroke="url(#prog)" strokeWidth="7" />
              </DialFace>
              <DialText>Restart</DialText>
            </Dial>
          </DialPane>
          <Results>
            <ChartArea><Chart /></ChartArea>
            <Divider />
            <ServerRow>
              <ServerIcon><ServerDrawing /></ServerIcon>
              <ServerInfo>
                <div>Jakarta, Jakarta</div>
                <div>10 Gb/s iForte</div>
                <Country>ID <Flag /></Country>
              </ServerInfo>
              <Provider>
                <svg width="68" height="22" viewBox="0 0 68 22">
                  <text x="1" y="17.500" fontFamily="Liberation Sans" fontWeight="700" fontStyle="italic" fontSize="16" fill="#7c7f83" textLength="66" lengthAdjust="spacingAndGlyphs">iFORTE</text>
                  <circle cx="3.500" cy="3.500" r="2" fill="#fff" stroke="#d9c67c" /><path d="M0 20.500h67" stroke="#c9cbcd" strokeWidth=".8" />
                </svg>
              </Provider>
            </ServerRow>
          </Results>
        </Middle>
        <Cards>{cards.map((c) => <ResultCard key={c.id} {...c} />)}</Cards>
        <Footer>
          <NetworkButton>
            <svg width="28" height="23" viewBox="0 0 28 23" fill="#fff"><path d="M9.500 0h9v8h-9zM0 15h9v8H0zM19 15h9v8h-9zM13 8h2v4h11v3h-2v-1H4v1H2v-3h11z" /></svg>
          </NetworkButton>
          <DeviceInfo>
            <div>Institut Agama Islam Negeri Pekalongan</div>
            <div>Windows 11</div>
            <div>winnt / 10.0.22000</div>
          </DeviceInfo>
          <Place>
            <PinBox>
              <svg width="19" height="25" viewBox="0 0 19 26" preserveAspectRatio="none"><path d="M9.500 0a9.400 9.600 0 0 1 9.400 9.700C18.900 15 13 20 9.500 26 6 20 .1 15 .1 9.700A9.400 9.600 0 0 1 9.500 0z" fill={DARK} /><ellipse cx="9.500" cy="9.800" rx="7.200" ry="7.500" fill={GREEN} /></svg>
              AUTO
            </PinBox>
            <Address>RW 02, Gambir, Central Jakarta, Special capital Region of Jakarta, Java, 10110, Indonesia</Address>
          </Place>
        </Footer>
      </Window>

      <Taskbar>
        <Start />
        <SearchBox>
          <svg width="16" height="17" viewBox="0 0 16 17"><circle cx="9.500" cy="6.500" r="5.500" fill="#5a5a5a" stroke="#ddd" strokeWidth="1.500" /><path d="M5.500 10.500L1 15.500" stroke="#ddd" strokeWidth="1.900" /></svg>
          Search
        </SearchBox>
        <Apps>
          {apps.map((icon, i) => (
            <AppSlot key={i} $active={i === 13}>
              {icon}
              {i === 13 && <Indicator $w={16} $c="#5cbdf0" />}
              {i === 14 && <Indicator $w={6} $c="#9a9a9a" />}
            </AppSlot>
          ))}
        </Apps>
        <Tray>
          <svg width="14" height="9" viewBox="0 0 14 9"><path d="M1 8l6-6.500L13 8" fill="none" stroke="#fff" strokeWidth="1.200" /></svg>
          <Language>ENG</Language>
          <Status>
            <svg width="18" height="17" viewBox="0 0 18 17" fill="none" stroke="#fff" strokeWidth="1.200"><path d="M11 2H1v10h13V9M5 15.500h7M7 12v3M9.500 12v3M12 1h5v4h-5zM14.500 5v4" /></svg>
            <svg width="18" height="15" viewBox="0 0 18 15" fill="none" stroke="#fff" strokeWidth="1.200"><path d="M1 5h3l4-3.500v12L4 10H1zM11.500 5.500l5 5M16.500 5.500l-5 5" /></svg>
            <svg width="18" height="15" viewBox="0 0 18 15" fill="none" stroke="#fff" strokeWidth="1.300"><path d="M8 4h7v8H5V9.500M15 6.500h2v3h-2M1 3.500h5v2q-2.500 3-5 0zM2.300 3.500V1M4.700 3.500V1M3.500 7v2.500H5" /></svg>
          </Status>
          <Clock><div>1:09 PM</div><div>6/17/2025</div></Clock>
          <Notice>7</Notice>
        </Tray>
      </Taskbar>
    </Desktop>
  );
}
